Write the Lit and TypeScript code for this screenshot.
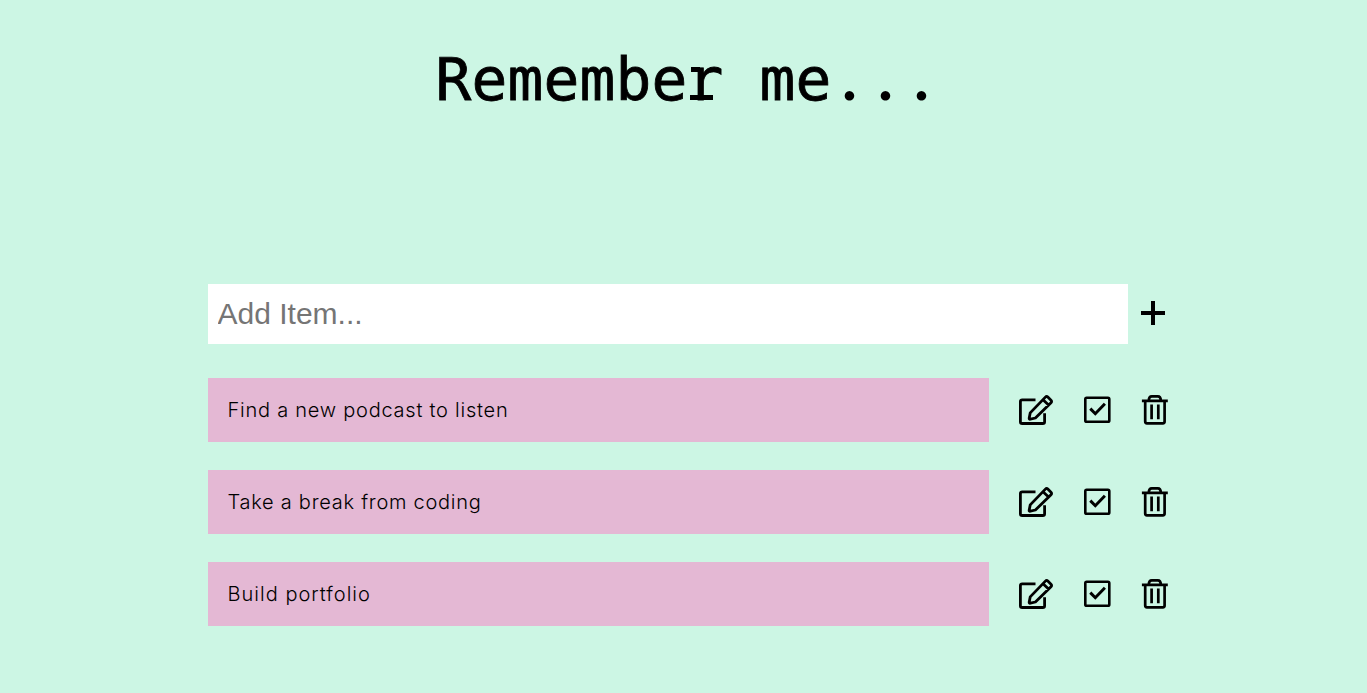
import { LitElement, html, css, svg } from "lit";
import { customElement, property } from "lit/decorators.js";

const editIcon = svg`<svg width="36" height="36" viewBox="0 0 36 36" fill="none" stroke="#000" stroke-width="2.8" stroke-linecap="round" stroke-linejoin="round">
  <path d="M17.5 7.8H4.2Q2.4 7.8 2.4 9.6V29.7Q2.4 31.5 4.2 31.5H24.8Q26.6 31.5 26.6 29.7V21.2" stroke-linecap="butt"/>
  <path d="M12.2 20.9 27.4 5.1Q28.6 3.9 29.8 5.1L33 8.3Q34.2 9.5 33 10.7L17.4 26L12.4 27.2Q10.9 27.5 11.2 26ZM25 7.7 30.6 13.1"/>
</svg>`;

const checkIcon = svg`<svg width="28" height="36" viewBox="0 0 28 36" fill="none" stroke="#000" stroke-width="2.6" stroke-linejoin="round">
  <rect x="2.3" y="5.8" width="24" height="24" rx="1.4"/>
  <path d="m7.3 16.6 5 5.1 9.6-9.9" stroke-width="3" stroke-linejoin="miter"/>
</svg>`;

const trashIcon = svg`<svg width="28" height="36" viewBox="0 0 28 36" fill="none" stroke="#000" stroke-width="2.7" stroke-linejoin="round">
  <path d="M.9 8.8H26.8M7.8 8.8Q7.8 4.4 10.8 4.4H16.8Q19.8 4.4 19.8 8.8"/>
  <path d="M4.2 8.8V29.5Q4.2 31.3 6 31.3H21.8Q23.6 31.3 23.6 29.5V8.8M10.6 12.6V27.2M17.3 12.6V27.2"/>
</svg>`;

@customElement("todo-item")
class TodoItem extends LitElement {
  @property() label = "";
  @property({ type: Number }) spacing = 0;

  static styles = css`
    :host { display: flex; align-items: center; height: 64px; }
    .label {
      box-sizing: border-box; width: 781px; height: 64px; padding-left: 19.5px;
      background: #e4b8d4; color: #000;
      font: 300 20px/64px Inter, "Open Sans", sans-serif;
      white-space: nowrap;
    }
    .actions { display: flex; align-items: center; margin-left: 29px; }
    .icon { display: flex; }
    .check { margin-left: 29px; }
    .trash { margin-left: 29.6px; }
  `;

  render() {
    return html`
      <div class="label" style="letter-spacing:${this.spacing}px">${this.label}</div>
      <div class="actions">
        <span class="icon">${editIcon}</span>
        <span class="icon check">${checkIcon}</span>
        <span class="icon trash">${trashIcon}</span>
      </div>`;
  }
}

@customElement("app-root")
class AppRoot extends LitElement {
  items = [
    { label: "Find a new podcast to listen", spacing: 0.76 },
    { label: "Take a break from coding", spacing: 0.74 },
    { label: "Build portfolio", spacing: 1.02 },
  ];

  static styles = css`
    :host {
      display: block; box-sizing: border-box; height: 693px; overflow: hidden;
      background: #ccf6e4; color: #000;
    }
    .title {
      margin: 0; padding: 33px 0 0 8px; height: 80px; text-align: center;
      font: 400 59.5px/80px "DejaVu Sans Mono", monospace;
      letter-spacing: 0.18px; white-space: pre;
      -webkit-text-stroke: 0.8px #000;
    }
    .slab { position: relative; }
    .slab::before, .slab::after { content: ""; position: absolute; height: 5px; background: #000; }
    .slab::before { left: 4px; bottom: 42px; width: 9px; }
    .slab::after { left: 3px; bottom: 14px; width: 23px; }
    .dot { display: inline-block; width: 36px; font-family: Lato, sans-serif; font-size: 76px; line-height: 1; letter-spacing: 0; -webkit-text-stroke: 0; }
    .add { display: flex; align-items: center; margin: 171px 0 0 208px; height: 60px; }
    .field {
      box-sizing: border-box; width: 920px; height: 60px; padding: 0 9.5px; border: 0; border-radius: 0; outline: 0;
      background: #fff; font: 30px "Liberation Sans", Arial, sans-serif;
    }
    .field::placeholder { color: #757575; opacity: 1; }
    .plus { margin: 0 0 2px 13px; display: block; }
    .list { display: flex; flex-direction: column; gap: 28px; margin: 34px 0 0 208px; }
  `;

  render() {
    return html`
      <h1 class="title">Remembe<span class="slab">r</span> me<span class="dot">.</span><span class="dot">.</span><span class="dot">.</span></h1>
      <div class="add">
        <input class="field" placeholder="Add Item..." />
        <svg class="plus" width="24" height="24" viewBox="0 0 24 24" fill="none" stroke="#000" stroke-width="4"><path d="M0 12H24M12 0V24"/></svg>
      </div>
      <div class="list">
        ${this.items.map((i) => html`<todo-item .label=${i.label} .spacing=${i.spacing}></todo-item>`)}
      </div>`;
  }
}
